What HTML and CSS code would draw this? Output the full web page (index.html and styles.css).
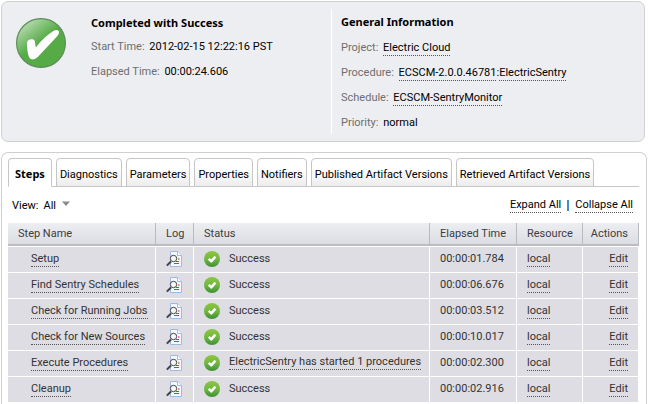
FILE: index.html
```html
<!DOCTYPE html>
<html lang="en">
<head>
<meta charset="utf-8">
<title>Job Details</title>
<link rel="stylesheet" href="styles.css">
</head>
<body>
<svg class="defs" aria-hidden="true">
  <defs>
    <linearGradient id="big" x1="0.1" y1="0.05" x2="0.6" y2="0.7">
      <stop offset="0" stop-color="#c4e2bf"/><stop offset="0.7" stop-color="#56ab47"/>
    </linearGradient>
    <linearGradient id="small" x1="0" y1="0" x2="0" y2="1">
      <stop offset="0" stop-color="#8cc63e"/><stop offset="0.5" stop-color="#72b840"/><stop offset="1" stop-color="#3c9038"/>
    </linearGradient>
    <symbol id="ok" viewBox="0 0 16 16">
      <circle cx="8" cy="8" r="8" fill="url(#small)"/>
      <path d="M4.700 7.900 7.300 10.400 11.400 5.600" fill="none" stroke="#fff" stroke-width="2.4" stroke-linejoin="round"/>
    </symbol>
    <symbol id="log" viewBox="0 0 16 16">
      <path d="M4.500.5h7l4 4v11h-11z" fill="#f4f8ff" stroke="#a3b8e2"/>
      <path d="M11.500.5v4h4" fill="#fff" stroke="#a3b8e2"/>
      <path d="M10 10.500h3M8 12.500h5" stroke="#169c2c"/>
      <path d="M12 8h1.500" stroke="#c81e2c"/>
      <path d="M5 10.500.8 14.600" stroke="#444" stroke-width="2"/>
      <circle cx="7.500" cy="7.500" r="3.200" fill="#f5f7fb" stroke="#444" stroke-width="1"/>
    </symbol>
  </defs>
</svg>
<section class="summary">
  <div class="outcome">
    <svg class="badge" viewBox="0 0 50 50" role="img" aria-label="Success">
      <circle cx="25" cy="25" r="24.4" fill="url(#big)" stroke="#5b8d57" stroke-width="1.2"/>
      <path d="M11 25c0-3.700 6.500-5.200 7.800-2l1 6.500C25 22.500 31 17 38.200 12.500c2.200-1.200 4.800-.5 4.800 1.500 0 2-.6 2.800-1.800 4.200L22 38.800c-3 3.200-7.500 3.500-8.900.5C11.500 35.500 11 30.500 11 25z" fill="#fff"/>
    </svg>
    <div class="facts">
      <h2>Completed with Success</h2>
      <p><span class="label">Start Time:</span> 2012-02-15 12:22:16 PST</p>
      <p><span class="label">Elapsed Time:</span> 00:00:24.606</p>
    </div>
  </div>
  <div class="general">
    <h2>General Information</h2>
    <p><span class="label">Project:</span> <a href="#">Electric Cloud</a></p>
    <p><span class="label">Procedure:</span> <a href="#">ECSCM-2.0.0.46781</a>:<a href="#">ElectricSentry</a></p>
    <p><span class="label">Schedule:</span> <a href="#">ECSCM-SentryMonitor</a></p>
    <p><span class="label">Priority:</span> normal</p>
  </div>
</section>
<main class="details">
  <div class="tabs" role="tablist">
    <button class="tab active" role="tab" aria-selected="true">Steps</button>
    <button class="tab" role="tab">Diagnostics</button>
    <button class="tab" role="tab">Parameters</button>
    <button class="tab" role="tab">Properties</button>
    <button class="tab" role="tab">Notifiers</button>
    <button class="tab" role="tab">Published Artifact Versions</button>
    <button class="tab" role="tab">Retrieved Artifact Versions</button>
  </div>
  <div class="toolbar">
    <label for="view">View:</label>
    <select id="view"><option>All</option></select>
    <svg class="arrow" viewBox="0 0 8 5" aria-hidden="true"><path d="M0 .5h8L4 5z" fill="#8a8a8a"/></svg>
    <div class="expanders"><a href="#">Expand All</a><span class="bar"></span><a href="#">Collapse All</a></div>
  </div>
  <table>
    <colgroup><col class="c-name"><col class="c-log"><col><col class="c-time"><col class="c-res"><col class="c-act"></colgroup>
    <thead><tr><th>Step Name</th><th>Log</th><th>Status</th><th>Elapsed Time</th><th>Resource</th><th>Actions</th></tr></thead>
    <tbody>
      <tr><td><a href="#">Setup</a></td><td><svg><use href="#log"/></svg></td><td><div class="status"><svg><use href="#ok"/></svg>Success</div></td><td>00:00:01.784</td><td><a href="#">local</a></td><td><a href="#">Edit</a></td></tr>
      <tr><td><a href="#">Find Sentry Schedules</a></td><td><svg><use href="#log"/></svg></td><td><div class="status"><svg><use href="#ok"/></svg>Success</div></td><td>00:00:06.676</td><td><a href="#">local</a></td><td><a href="#">Edit</a></td></tr>
      <tr><td><a href="#">Check for Running Jobs</a></td><td><svg><use href="#log"/></svg></td><td><div class="status"><svg><use href="#ok"/></svg>Success</div></td><td>00:00:03.512</td><td><a href="#">local</a></td><td><a href="#">Edit</a></td></tr>
      <tr><td><a href="#">Check for New Sources</a></td><td><svg><use href="#log"/></svg></td><td><div class="status"><svg><use href="#ok"/></svg>Success</div></td><td>00:00:10.017</td><td><a href="#">local</a></td><td><a href="#">Edit</a></td></tr>
      <tr><td><a href="#">Execute Procedures</a></td><td><svg><use href="#log"/></svg></td><td><div class="status"><svg><use href="#ok"/></svg><a href="#">ElectricSentry has started 1 procedures</a></div></td><td>00:00:02.300</td><td><a href="#">local</a></td><td><a href="#">Edit</a></td></tr>
      <tr><td><a href="#">Cleanup</a></td><td><svg><use href="#log"/></svg></td><td><div class="status"><svg><use href="#ok"/></svg>Success</div></td><td>00:00:02.916</td><td><a href="#">local</a></td><td><a href="#">Edit</a></td></tr>
    </tbody>
  </table>
</main>
</body>
</html>
```
FILE: styles.css
```css
* { box-sizing: border-box; }
body {
  margin: 0;
  padding: 1px 1px 0;
  min-height: 100vh;
  display: flex;
  flex-direction: column;
  gap: 10px;
  background: #fff;
  color: #000;
  font: 11px/17px Tahoma, Roboto, sans-serif;
}
.defs { position: absolute; width: 0; height: 0; }
h2 { margin: 0; font: 700 11px/18px Tahoma, "Noto Sans", sans-serif; }
p { margin: 0; white-space: nowrap; }
.label { margin-right: 2px; color: #6e6e6e; }
a { color: inherit; text-decoration: none; border-bottom: 1px dotted #555; line-height: 14px; display: inline-block; }

.summary {
  display: grid;
  grid-template-columns: 330px 1fr;
  margin-right: 2px;
  padding: 7px 0;
  border: 1px solid #cfd0d0;
  border-radius: 7px;
  background: #edeef2;
}
.outcome { display: flex; gap: 25px; padding: 6px 14px; border-right: 1px solid #fff; }
.badge { width: 50px; height: 50px; flex: none; margin-top: 3px; }
.facts, .general { display: flex; flex-direction: column; gap: 8px; }
.facts h2 { line-height: 15px; }
.general { padding: 4px 9px 3px; }

.details {
  flex: 1;
  padding: 5px 7px 0 6px;
  border: 1px solid #cfd0d0;
  border-bottom: 0;
  border-radius: 7px 7px 0 0;
}
.tabs { display: flex; gap: 4px; height: 29px; border-bottom: 1px solid #c6c6c6; }
.tab {
  height: 29px;
  padding: 3px 3px 0;
  border: 1px solid #c6c6c6;
  border-radius: 4px 4px 0 0;
  background: linear-gradient(#fff 40%, #ececec);
  color: #000;
  font: inherit;
  white-space: nowrap;
}
.tab.active { padding: 1px 6px 0; border-bottom-color: #fff; background: #fff; font: 700 11px/17px Tahoma, "Noto Sans", sans-serif; }

.toolbar { display: flex; align-items: center; height: 36px; padding: 0 6px 0 4px; }
#view { appearance: none; width: 19px; margin: 0 0 0 5px; padding: 0; border: 0; background: none; color: inherit; font: inherit; }
.arrow { width: 8px; height: 5px; margin: 0 0 4px; }
.expanders { display: flex; align-items: center; margin-left: auto; }
.bar { width: 2px; height: 11px; margin: 0 6px; background: #3f8fd0; }

table { width: 100%; table-layout: fixed; border-collapse: separate; border-spacing: 0; color: #333; }
.c-name { width: 148px; }
.c-log { width: 38px; }
.c-time { width: 87px; }
.c-res { width: 66px; }
.c-act { width: 56px; }
th {
  height: 23px;
  padding: 0 0 0 10px;
  border-right: 1px solid #b9bac0;
  border-bottom: 2px solid #bcbdc3;
  background: linear-gradient(#edeef1, #dcdde3);
  color: #3c3c42;
  font-weight: 400;
  text-align: left;
}
td {
  height: 26px;
  padding: 0 0 2px 10px;
  border-top: 1px solid #fff;
  border-right: 1px solid #fff;
  background: #dedde4;
  white-space: nowrap;
}
td:first-child { padding-left: 23px; }
td svg { display: block; flex: none; width: 16px; height: 16px; }
.status { display: flex; align-items: center; gap: 9px; }
td:last-child { padding: 0 10px 2px 0; text-align: right; }
th:last-child { padding: 0 10px 0 0; text-align: right; }
```
